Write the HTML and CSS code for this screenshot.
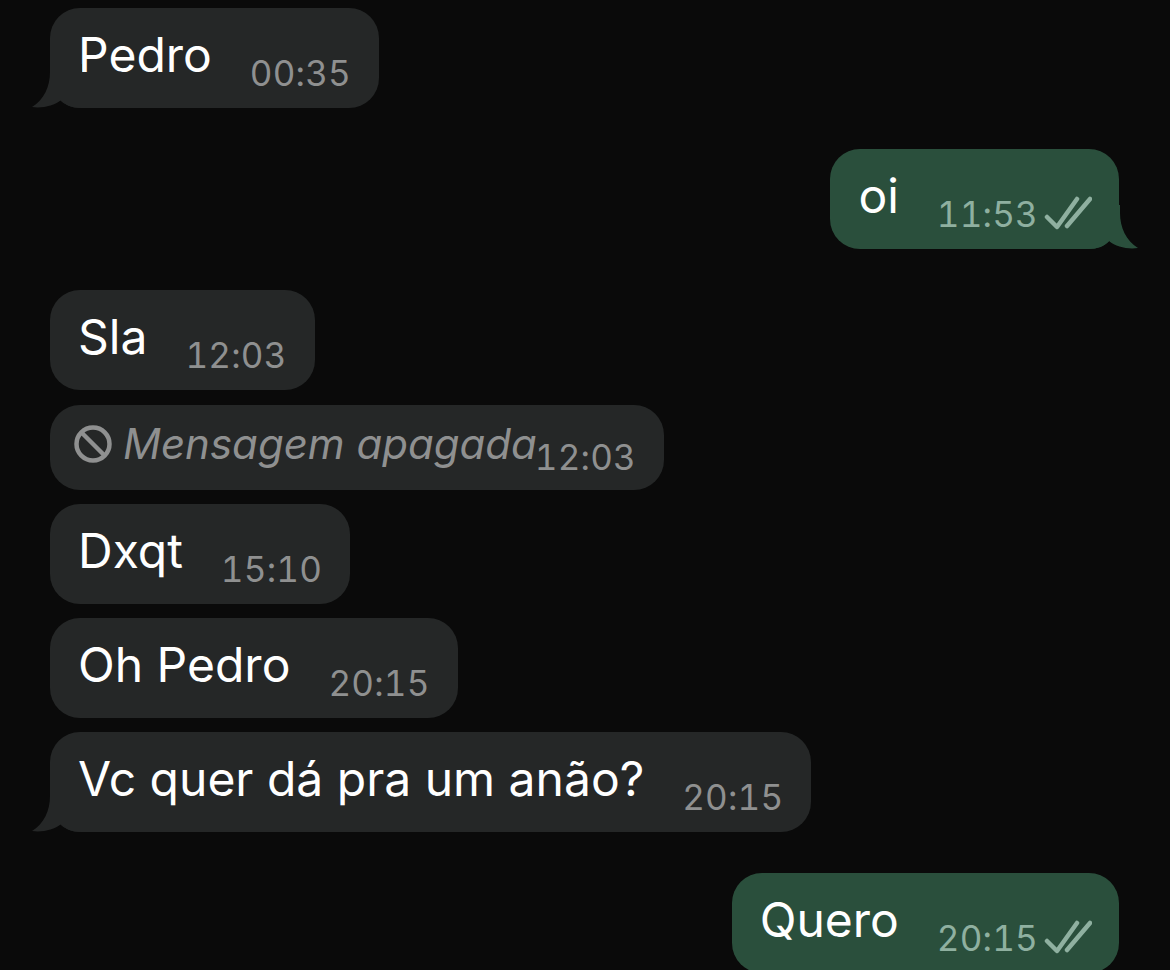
FILE: index.html
```html
<!DOCTYPE html>
<html lang="pt">
<head>
<meta charset="utf-8">
<title>Conversa</title>
<link rel="stylesheet" href="styles.css">
</head>
<body>
<main class="chat">
  <div class="bubble in tailed"><span class="text">Pedro</span><span class="time">00:35</span>
    <svg class="tail tail-in" width="52" height="44" viewBox="0 0 52 44"><path d="M18 0V8C18 22 12 36 0 43C10 44.5 22 42 29 36C33 41 40 44 50 44V0Z"/></svg></div>

  <div class="bubble out tailed gap-big"><span class="text">oi</span><span class="time">11:53</span>
    <svg class="ticks" width="48" height="36" viewBox="0 0 48 36"><path d="M3 22L13 32L33 4M23 31L46 4"/></svg>
    <svg class="tail tail-out" width="52" height="44" viewBox="0 0 52 44"><path d="M18 0V8C18 22 12 36 0 43C10 44.5 22 42 29 36C33 41 40 44 50 44V0Z"/></svg></div>

  <div class="bubble in gap-big"><span class="text">Sla</span><span class="time">12:03</span></div>

  <div class="bubble in deleted">
    <svg class="ban" width="38" height="38" viewBox="0 0 38 38"><circle cx="19" cy="19" r="16.5"/><path d="M7.5 7.5L30.5 30.5"/></svg>
    <span class="text">Mensagem apagada</span><span class="time">12:03</span></div>

  <div class="bubble in"><span class="text">Dxqt</span><span class="time">15:10</span></div>

  <div class="bubble in"><span class="text">Oh Pedro</span><span class="time">20:15</span></div>

  <div class="bubble in tailed"><span class="text">Vc quer dá pra um anão?</span><span class="time">20:15</span>
    <svg class="tail tail-in" width="52" height="44" viewBox="0 0 52 44"><path d="M18 0V8C18 22 12 36 0 43C10 44.5 22 42 29 36C33 41 40 44 50 44V0Z"/></svg></div>

  <div class="bubble out gap-big"><span class="text">Quero</span><span class="time">20:15</span>
    <svg class="ticks" width="48" height="36" viewBox="0 0 48 36"><path d="M3 22L13 32L33 4M23 31L46 4"/></svg></div>
</main>
</body>
</html>
```

FILE: styles.css
```css
html, body {
  margin: 0;
  height: 100%;
  background: #0a0a0a;
}
body {
  overflow: hidden;
}
.chat {
  display: flex;
  flex-direction: column;
  align-items: flex-start;
  gap: 14px;
  padding: 8px 51px 0 50px;
  font-family: Inter, "Liberation Sans", sans-serif;
}
.bubble {
  position: relative;
  display: flex;
  align-items: flex-start;
  height: 100px;
  box-sizing: border-box;
  padding: 19px 28px 0 28px;
  border-radius: 30px;
  background: #252727;
  color: #fff;
}
.bubble.out {
  align-self: flex-end;
  background: #2a4f3c;
}
.gap-big {
  margin-top: 27px;
}
.text {
  font-size: 48px;
  line-height: 56px;
  white-space: nowrap;
}
.time {
  margin: 26px 0 0 38px;
  font-size: 35px;
  line-height: 40px;
  letter-spacing: 0.2px;
  font-variant-numeric: tabular-nums;
  color: #8f9090;
  white-space: nowrap;
}
.out .time {
  color: #8fb0a0;
}
.ticks {
  flex: none;
  margin: 27px -1px 0 6px;
  fill: none;
  stroke: #8fb0a0;
  stroke-width: 4.5;
  stroke-linecap: round;
  stroke-linejoin: round;
}
.tail {
  position: absolute;
  bottom: 0;
  fill: #252727;
}
.tail-in {
  left: -18px;
}
.tail-out {
  right: -19px;
  transform: scaleX(-1);
  fill: #2a4f3c;
}
.deleted {
  height: 85px;
  margin-top: 1px;
  padding: 11px 28px 0 24px;
  color: #8f9090;
}
.deleted .text {
  font-size: 42px;
  font-style: italic;
}
.deleted .time {
  margin: 21px 0 0 -2px;
}
.ban {
  flex: none;
  margin: 9px 11px 0 0;
  fill: none;
  stroke: #8f9090;
  stroke-width: 4.5;
}
```
